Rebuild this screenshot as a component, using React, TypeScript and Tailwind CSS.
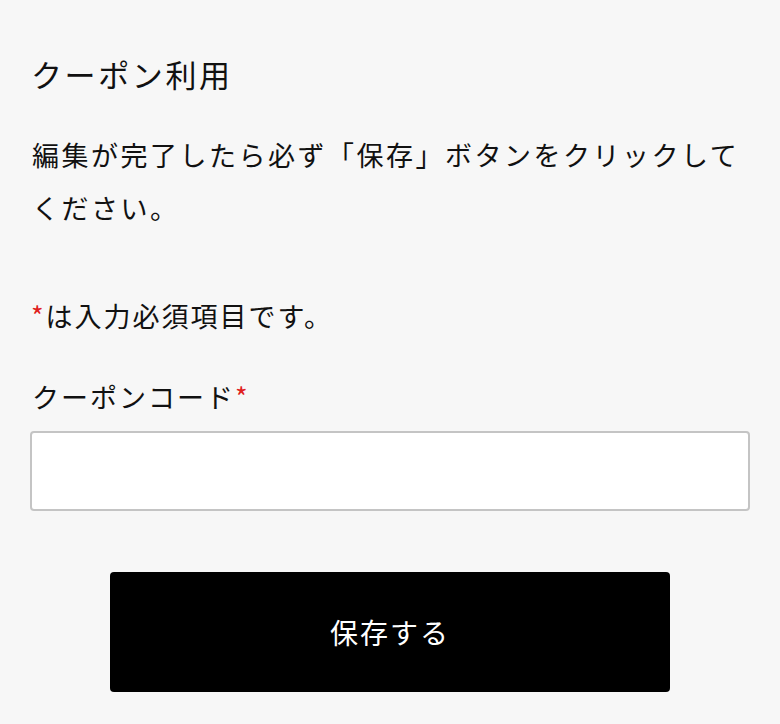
export default function App() {
  return (
    <div
      className="min-h-screen bg-[#f7f7f7] text-[#111] px-[30px] pt-[47px]"
      style={{ fontFamily: '"Noto Sans CJK JP", "Noto Sans", sans-serif' }}
    >
      <h1 className="text-[31px] leading-[54px] tracking-[2.6px] font-normal ml-[1px]">
        クーポン利用
      </h1>
      <p className="mt-[27px] text-[27px] leading-[53px] tracking-[2.5px] ml-[2px]">
        編集が完了したら必ず「保存」ボタンをクリックしてください。
      </p>
      <p className="mt-[55px] text-[27px] leading-[53px] tracking-[2px] ml-[1px]">
        <span className="text-[#e02020]">*</span>は入力必須項目です。
      </p>
      <label className="block mt-[28px] text-[27px] leading-[53px] tracking-[2px] ml-[2px]">
        クーポンコード<span className="text-[#e02020]">*</span>
      </label>
      <input
        type="text"
        className="mt-[8px] block w-full h-[80px] bg-white border-2 border-[#c4c4c4] rounded-[4px] px-4 text-[27px] outline-none"
      />
      <div className="flex justify-center mt-[61px]">
        <button className="w-[560px] h-[120px] bg-black text-white rounded-[4px] text-[28px] tracking-[2px]">
          保存する
        </button>
      </div>
    </div>
  );
}
